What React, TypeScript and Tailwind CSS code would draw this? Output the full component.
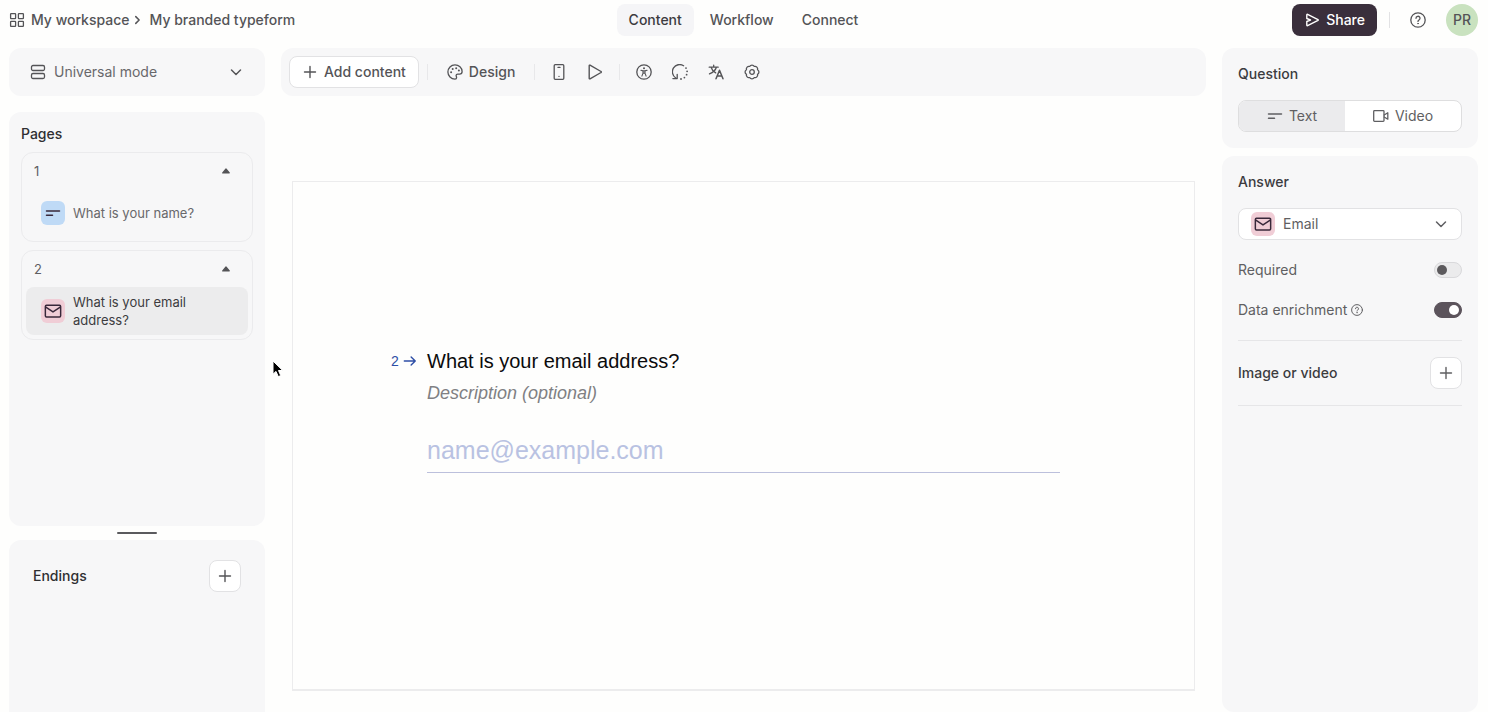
import { useState, type ReactNode } from "react";

interface Page {
	id: number;
	title: string;
	kind: "text" | "email";
}

const pages: Page[] = [
	{ id: 1, title: "What is your name?", kind: "text" },
	{ id: 2, title: "What is your email address?", kind: "email" },
];

const tabs = ["Content", "Workflow", "Connect"];

function Icon({
	children,
	className = "size-4",
}: {
	children: ReactNode;
	className?: string;
}) {
	return (
		<svg
			viewBox="0 0 16 16"
			fill="none"
			stroke="currentColor"
			strokeWidth="1.3"
			strokeLinecap="round"
			strokeLinejoin="round"
			className={`shrink-0 ${className}`}
			aria-hidden="true"
		>
			{children}
		</svg>
	);
}

function GridIcon() {
	return (
		<Icon>
			<rect x="1.6" y="1.6" width="5" height="5" rx="0.6" />
			<rect x="9.4" y="1.6" width="5" height="5" rx="0.6" />
			<rect x="1.6" y="9.4" width="5" height="5" rx="0.6" />
			<rect x="9.4" y="9.4" width="5" height="5" rx="0.6" />
		</Icon>
	);
}

function ModeIcon() {
	return (
		<Icon>
			<rect x="1.5" y="1.5" width="13" height="5" rx="1.5" />
			<rect x="1.5" y="9.5" width="13" height="5" rx="1.5" />
		</Icon>
	);
}

function ChevronDown({ className = "size-4" }: { className?: string }) {
	return (
		<Icon className={className}>
			<path d="M3.5 6 8 10.5 12.5 6" strokeWidth="1.5" />
		</Icon>
	);
}

function PlusIcon() {
	return (
		<Icon>
			<path d="M8 2.5v11M2.5 8h11" strokeWidth="1.4" />
		</Icon>
	);
}

function HelpIcon({ className }: { className?: string }) {
	return (
		<Icon className={className}>
			<circle cx="8" cy="8" r="7.2" />
			<path d="M6 6.3a2 2 0 1 1 3 1.7c-.7.4-1 .7-1 1.4" />
			<circle cx="8" cy="11.6" r="0.4" fill="currentColor" strokeWidth="0.8" />
		</Icon>
	);
}

function ShortTextIcon() {
	return (
		<Icon>
			<path d="M1.5 6h13M1.5 10.3h6" strokeWidth="1.5" />
		</Icon>
	);
}

function MailIcon() {
	return (
		<Icon className="size-[18px]">
			<rect x="1.2" y="2.9" width="13.6" height="10.4" rx="1" />
			<path d="m1.6 4.6 6.4 4.2 6.4-4.2" />
		</Icon>
	);
}

function PaletteIcon() {
	return (
		<Icon>
			<path d="M8 .9a7.1 7.1 0 1 0 0 14.2c1 0 1.6-.7 1.6-1.6 0-.8-.5-1.1-.5-1.9 0-.9.7-1.4 1.6-1.4h1.9c1.5 0 2.5-1 2.5-2.6C15.1 3.7 11.8.9 8 .9Z" />
			<g fill="currentColor" stroke="none">
				<circle cx="4.1" cy="8.3" r="1" />
				<circle cx="5.7" cy="5" r="1" />
				<circle cx="9.2" cy="4.2" r="1" />
				<circle cx="11.9" cy="6.5" r="1" />
			</g>
		</Icon>
	);
}

function PhoneIcon() {
	return (
		<Icon>
			<rect x="3.2" y="0.7" width="9.6" height="14.6" rx="1" />
			<path d="M7 3.4h2M8 12.3v.1" />
		</Icon>
	);
}

function PlayIcon() {
	return (
		<Icon>
			<path
				d="M2.2 1.7v12.6c0 .5.4.7.8.5l11-6.3c.4-.2.4-.8 0-1L3 1.2c-.4-.2-.8 0-.8.5Z"
				strokeWidth="1.4"
			/>
		</Icon>
	);
}

function AccessibilityIcon() {
	return (
		<Icon>
			<circle cx="8" cy="8" r="7.2" />
			<circle cx="8" cy="4.3" r="1" fill="currentColor" stroke="none" />
			<path
				d="M4.9 6.3 7 6.9h2l2.1-.6M7 6.9v2.2l-1.1 3M9 6.9v2.2l1.1 3M7 9.1h2"
				strokeWidth="1.1"
			/>
		</Icon>
	);
}

function LoopIcon() {
	return (
		<Icon>
			<path d="M11.6 1.7A7.2 7.2 0 0 0 3.8 14M.9 14.6h4.3v-4.3" />
			<g fill="currentColor" stroke="none">
				<circle cx="14" cy="4.1" r="0.9" />
				<circle cx="15.1" cy="7.3" r="0.9" />
				<circle cx="14.6" cy="10.7" r="0.9" />
				<circle cx="12.4" cy="13.6" r="0.9" />
				<circle cx="9" cy="15" r="0.9" />
			</g>
		</Icon>
	);
}

function TranslateIcon() {
	return (
		<Icon>
			<path d="M1.2 3.2h9M5.7 1.2v2M8.4 3.2C7.6 6 5.2 8.3 1.5 9.9M3.1 3.2c.7 2.5 2.3 4.4 4.6 5.7" />
			<path d="m8 14.8 3.5-8.6 3.5 8.6M9.2 12h4.6" strokeWidth="1.5" />
		</Icon>
	);
}

// Eight soft lobes around the hub
function GearIcon() {
	return (
		<Icon>
			<path d="M13.54 5.7A2.6 2.6 0 0 1 13.54 10.3 2.6 2.6 0 0 1 10.3 13.54 2.6 2.6 0 0 1 5.7 13.54 2.6 2.6 0 0 1 2.46 10.3 2.6 2.6 0 0 1 2.46 5.7 2.6 2.6 0 0 1 5.7 2.46 2.6 2.6 0 0 1 10.3 2.46 2.6 2.6 0 0 1 13.54 5.7Z" />
			<circle cx="8" cy="8" r="2.3" />
		</Icon>
	);
}

function KindBadge({ kind }: { kind: Page["kind"] }) {
	return (
		<span
			className={`flex size-6 shrink-0 items-center justify-center rounded-md text-[#38283a] ${
				kind === "text" ? "bg-[#bfdaf6]" : "bg-[#f0cdd6]"
			}`}
		>
			{kind === "text" ? <ShortTextIcon /> : <MailIcon />}
		</span>
	);
}

function ToolButton({ label, children }: { label: string; children: ReactNode }) {
	return (
		<button
			type="button"
			aria-label={label}
			className="flex size-8 items-center justify-center rounded-lg hover:bg-gray-200"
		>
			{children}
		</button>
	);
}

function AddButton({ label }: { label: string }) {
	return (
		<button
			type="button"
			aria-label={label}
			className="flex size-8 items-center justify-center rounded-lg border border-[#e2e2e4] bg-white hover:bg-gray-50"
		>
			<PlusIcon />
		</button>
	);
}

function Divider() {
	return <span className="mx-2 h-4 w-px shrink-0 bg-[#e8e8ea]" />;
}

function Toggle({
	id,
	checked,
	onChange,
}: {
	id: string;
	checked: boolean;
	onChange: (value: boolean) => void;
}) {
	return (
		<input
			id={id}
			type="checkbox"
			role="switch"
			checked={checked}
			onChange={(e) => onChange(e.target.checked)}
			className="flex h-4 w-7 shrink-0 cursor-pointer appearance-none items-center rounded-full border border-[#d9d9db] bg-[#ebebec] px-0.5 before:size-2.5 before:rounded-full before:bg-[#5c5a5d] checked:justify-end checked:border-[#5c545c] checked:bg-[#5c545c] checked:before:bg-white"
		/>
	);
}

export default function App() {
	const [tab, setTab] = useState("Content");
	const [selectedPage, setSelectedPage] = useState(2);
	const [questionType, setQuestionType] = useState("Text");
	const [required, setRequired] = useState(false);
	const [enrichment, setEnrichment] = useState(true);

	return (
		<div className="flex h-screen flex-col gap-2 overflow-hidden bg-[#fefefd] font-['Inter',sans-serif] text-sm text-[#545457]">
			<header className="grid h-10 shrink-0 grid-cols-[1fr_auto_1fr] items-center pr-[10px] pl-[9px] font-medium">
				<nav aria-label="Breadcrumb" className="flex items-center gap-0.5">
					<a href="#workspace" className="flex items-center gap-1.5">
						<GridIcon />
						My workspace
					</a>
					<Icon className="size-3">
						<path d="M5 3.5 9.5 8 5 12.5" strokeWidth="2" />
					</Icon>
					<a href="#form" className="ml-1">
						My branded typeform
					</a>
				</nav>

				<nav aria-label="Sections" className="flex gap-1">
					{tabs.map((name) => (
						<button
							key={name}
							type="button"
							onClick={() => setTab(name)}
							className={`h-8 rounded-lg px-3 ${
								tab === name ? "bg-[#f5f5f7] text-[#3c3c3f]" : ""
							}`}
						>
							{name}
						</button>
					))}
				</nav>

				<div className="flex items-center justify-end">
					<button
						type="button"
						className="flex h-8 items-center gap-1.5 rounded-lg bg-[#3a2f3c] px-3 text-white"
					>
						<Icon>
							<path
								d="M2.8 2.9v3.6L6.5 8 2.8 9.5v3.6c0 .5.4.7.8.5L14 8.4c.4-.2.4-.6 0-.8L3.6 2.4c-.4-.2-.8 0-.8.5Z"
								strokeWidth="1.4"
							/>
						</Icon>
						Share
					</button>
					<span className="mx-3 h-4 w-px bg-[#e2e2e4]" />
					<button
						type="button"
						aria-label="Help"
						className="flex size-8 items-center justify-center"
					>
						<HelpIcon />
					</button>
					<button
						type="button"
						aria-label="Account"
						className="ml-3 size-8 rounded-full bg-[#c9e2bf]"
					>
						PR
					</button>
				</div>
			</header>

			<div className="flex min-h-0 flex-1 gap-4 pr-[10px] pl-[9px]">
				<aside className="flex w-64 shrink-0 flex-col">
					<div className="relative flex h-12 shrink-0 items-center rounded-xl bg-[#f7f7f8]">
						<span className="pointer-events-none absolute left-[21px]">
							<ModeIcon />
						</span>
						<select
							aria-label="Mode"
							className="h-full w-full appearance-none rounded-xl bg-transparent pl-[45px] text-[#68686b]"
						>
							<option>Universal mode</option>
						</select>
						<ChevronDown className="pointer-events-none absolute right-[21px] size-4" />
					</div>

					<section className="mt-4 flex min-h-0 flex-1 flex-col gap-2 rounded-xl bg-[#f7f7f8] p-3">
						<h2 className="font-medium text-[#2f2f32]">Pages</h2>
						{pages.map((page) => (
							<div
								key={page.id}
								className="rounded-xl border border-[#ebebed] px-1 pb-1 text-[13px]"
							>
								<div className="flex h-9 items-center justify-between pr-4 pl-2">
									<span className="text-[#5f5f62]">{page.id}</span>
									<button type="button" aria-label={`Collapse page ${page.id}`}>
										<svg viewBox="0 0 12 8" className="h-2 w-3" aria-hidden="true">
											<path
												d="M6 2 9.3 5.9H2.7Z"
												fill="currentColor"
												stroke="currentColor"
												strokeWidth="1.2"
												strokeLinejoin="round"
											/>
										</svg>
									</button>
								</div>
								<button
									type="button"
									onClick={() => setSelectedPage(page.id)}
									className={`flex h-12 w-full items-center gap-2 rounded-lg pr-8 pl-[15px] text-left leading-[18px] ${
										selectedPage === page.id
											? "bg-[#ececed] text-[#3c3c3f]"
											: "text-[#68686b]"
									}`}
								>
									<KindBadge kind={page.kind} />
									{page.title}
								</button>
							</div>
						))}
					</section>

					<div className="flex h-3.5 shrink-0 items-center justify-center">
						<span className="h-0.5 w-10 rounded-full bg-[#5a5a5d]" />
					</div>

					<section className="h-43 shrink-0 rounded-t-xl bg-[#f7f7f8] px-6 pt-5">
						<div className="flex items-center justify-between">
							<h2 className="font-medium text-[#2f2f32]">Endings</h2>
							<AddButton label="Add ending" />
						</div>
					</section>
				</aside>

				<main className="min-w-0 flex-1">
					<div className="flex h-12 items-center rounded-xl bg-[#f7f7f8] px-2">
						<button
							type="button"
							className="flex h-8 items-center gap-1.5 rounded-lg border border-[#e2e2e4] bg-white px-3 font-medium"
						>
							<PlusIcon />
							Add content
						</button>
						<Divider />
						<button
							type="button"
							className="flex h-8 items-center gap-1.5 rounded-lg px-[11px] font-medium"
						>
							<PaletteIcon />
							Design
						</button>
						<Divider />
						<div className="flex gap-1">
							<ToolButton label="Device preview">
								<PhoneIcon />
							</ToolButton>
							<ToolButton label="Play preview">
								<PlayIcon />
							</ToolButton>
						</div>
						<Divider />
						<div className="flex gap-1">
							<ToolButton label="Accessibility">
								<AccessibilityIcon />
							</ToolButton>
							<ToolButton label="Recall">
								<LoopIcon />
							</ToolButton>
							<ToolButton label="Translate">
								<TranslateIcon />
							</ToolButton>
							<ToolButton label="Settings">
								<GearIcon />
							</ToolButton>
						</div>
					</div>

					<div className="mx-[11px] mt-[85px] flex aspect-[23/13] flex-col justify-center border border-b-2 border-[#ececed] pr-[134px] pb-[52px] pl-[98px] font-['Liberation_Sans',sans-serif]">
						<div className="flex">
							<div className="flex h-7 w-9 shrink-0 items-center gap-1 text-[#2e4ea6]">
								2
								<Icon className="size-3.5">
									<path d="M1.5 8H14M9.3 3.3 14 8l-4.7 4.7" strokeWidth="1.6" />
								</Icon>
							</div>
							<div className="min-w-0 flex-1">
								<h1 className="text-xl leading-7 text-[#0b0b0c]">
									What is your email address?
								</h1>
								<input
									type="text"
									aria-label="Description"
									placeholder="Description (optional)"
									className="mt-1.5 block h-6 w-full bg-transparent text-lg italic outline-none placeholder:text-[#808083]"
								/>
								<input
									type="email"
									aria-label="Email answer"
									placeholder="name@example.com"
									className="mt-6 block h-11 w-full border-b border-[#bcc0dc] bg-transparent text-[25px] outline-none placeholder:text-[#b9c2e2]"
								/>
							</div>
						</div>
					</div>
				</main>

				<aside className="flex w-64 shrink-0 flex-col gap-2">
					<section className="rounded-xl bg-[#f7f7f8] p-4">
						<h2 className="font-medium text-[#3c3c3f]">Question</h2>
						<div className="mt-4 flex h-8 overflow-hidden rounded-lg border border-[#dededf] bg-white text-[#5f5f62]">
							<button
								type="button"
								onClick={() => setQuestionType("Text")}
								className={`flex flex-auto items-center justify-center gap-1.5 ${
									questionType === "Text" ? "bg-[#ebebed]" : ""
								}`}
							>
								<ShortTextIcon />
								Text
							</button>
							<button
								type="button"
								onClick={() => setQuestionType("Video")}
								className={`flex flex-auto items-center justify-center gap-1.5 ${
									questionType === "Video" ? "bg-[#ebebed]" : ""
								}`}
							>
								<Icon>
									<rect x="0.7" y="2.7" width="10.3" height="10.6" rx="0.8" />
									<path d="m11.2 7 3.6-2.2v6.4L11.2 9" />
								</Icon>
								Video
							</button>
						</div>
					</section>

					<section className="flex-1 rounded-xl bg-[#f7f7f8] p-4 text-[#5f5f62]">
						<h2 className="font-medium text-[#3c3c3f]">Answer</h2>
						<div className="relative mt-4 flex h-8 items-center rounded-lg border border-[#e2e2e4] bg-white">
							<span className="pointer-events-none absolute left-3">
								<KindBadge kind="email" />
							</span>
							<select
								aria-label="Answer type"
								className="h-full w-full appearance-none rounded-lg bg-transparent pl-11"
							>
								<option>Email</option>
							</select>
							<ChevronDown className="pointer-events-none absolute right-3 size-4" />
						</div>

						<div className="mt-5 flex h-5 items-center justify-between">
							<label htmlFor="required">Required</label>
							<Toggle id="required" checked={required} onChange={setRequired} />
						</div>
						<div className="mt-5 flex h-5 items-center justify-between">
							<div className="flex items-center gap-1">
								<label htmlFor="enrichment">Data enrichment</label>
								<HelpIcon className="size-3" />
							</div>
							<Toggle id="enrichment" checked={enrichment} onChange={setEnrichment} />
						</div>

						<div className="mt-5 flex items-center justify-between border-y border-[#e6e6e8] py-4">
							<h2 className="font-medium text-[#3c3c3f]">Image or video</h2>
							<AddButton label="Add image or video" />
						</div>
					</section>
				</aside>
			</div>

			{/* Mouse pointer */}
			<svg
				viewBox="0 0 12 18"
				className="pointer-events-none absolute top-[360px] left-[272px] h-[18px] w-3"
				aria-hidden="true"
			>
				<path
					d="M1 1v13.2l3-2.8 2.3 5.2 2.4-1-2.2-5.1h4.2Z"
					fill="#000"
					stroke="#fff"
					strokeWidth="1"
				/>
			</svg>
		</div>
	);
}
